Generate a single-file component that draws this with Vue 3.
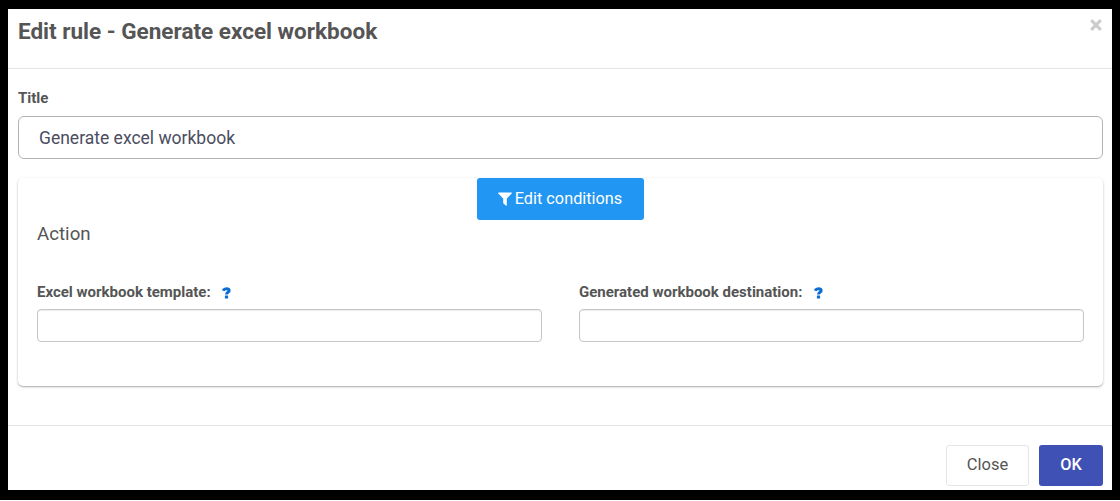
<script setup>
import { ref } from 'vue'

const title = ref('Generate excel workbook')
const fields = ref([
  { id: 'template', label: 'Excel workbook template:', value: '' },
  { id: 'destination', label: 'Generated workbook destination:', value: '' },
])
</script>

<template>
  <div class="backdrop">
    <section class="modal" role="dialog" aria-labelledby="modal-title">
      <header class="modal-header">
        <h1 id="modal-title">Edit rule - Generate excel workbook</h1>
        <button class="dismiss" type="button" aria-label="Dismiss">
          <svg viewBox="0 0 12 12" width="12" height="12">
            <path d="M1.2 1.2 10.8 10.8M10.8 1.2 1.2 10.8" />
          </svg>
        </button>
      </header>

      <main class="modal-body">
        <label class="label" for="title">Title</label>
        <input id="title" v-model="title" class="title-input" type="text" />

        <div class="card">
          <button class="btn conditions" type="button">
            <svg viewBox="0 0 14 14" width="14" height="14">
              <path d="M.6.6H13.4Q14.2.8 13.7 1.6L8.8 6.5V13.1Q8.6 14 7.8 13.5L5.2 11.2V6.5L.3 1.6Q-.2.8.6.6Z" />
            </svg>
            <span>Edit conditions</span>
          </button>
          <h2>Action</h2>
          <div class="fields">
            <div v-for="field in fields" :key="field.id" class="field">
              <div class="field-head">
                <label class="label" :for="field.id">{{ field.label }}</label>
                <svg class="help" viewBox="0 0 9 12" width="9" height="12">
                  <path class="hook" d="M1.2 3.7C1.8 2.3 2.8 1.7 4.3 1.7C6.1 1.7 7.2 2.4 7.2 3.7C7.2 5.4 4.5 5.2 4.5 7.6" />
                  <rect x="2.9" y="8.6" width="3.2" height="2.9" rx=".3" />
                </svg>
              </div>
              <input :id="field.id" v-model="field.value" class="field-input" type="text" />
            </div>
          </div>
        </div>
      </main>

      <footer class="modal-footer">
        <button class="btn close" type="button">Close</button>
        <button class="btn ok" type="button">OK</button>
      </footer>
    </section>
  </div>
</template>

<style>
body {
  background: #fff;
}
</style>

<style scoped>
.backdrop,
.backdrop * {
  box-sizing: border-box;
}
.backdrop {
  height: 500px;
  padding: 9px 8px 10px;
  background: #000;
  font-family: Roboto, "Liberation Sans", sans-serif;
  color: #555;
}
button,
input {
  font-family: inherit;
}
.modal {
  display: flex;
  flex-direction: column;
  height: 481px;
  background: #fff;
}
.modal-header {
  display: flex;
  justify-content: space-between;
  align-items: flex-start;
  height: 60px;
  padding: 9px 10px 0;
  border-bottom: 1px solid #e5e5e5;
}
h1 {
  margin: 0;
  font-size: 22.5px;
  line-height: 27px;
  font-weight: 700;
}
.dismiss {
  display: flex;
  padding: 0;
  border: 0;
  background: none;
  margin: 1px 0 0 0;
}
.dismiss svg {
  overflow: visible;
}
.dismiss path {
  stroke: #ccc;
  stroke-width: 3.2;
}
.modal-body {
  height: 356px;
  padding: 20px 9px 0 10px;
}
.label {
  display: block;
  font-size: 15px;
  line-height: 18px;
  font-weight: 700;
}
.title-input {
  display: block;
  width: 100%;
  height: 43px;
  margin-top: 9px;
  padding: 0 20px;
  border: 1px solid #b3b3b3;
  border-radius: 6px;
  background: #fff;
  color: #4a4d60;
  font-size: 17.5px;
}
.card {
  height: 208px;
  margin-top: 19px;
  padding: 0 19px;
  border-radius: 5px;
  box-shadow: 0 1px 3px rgba(0, 0, 0, 0.2), 0 1px 1px rgba(0, 0, 0, 0.16);
}
.btn {
  display: flex;
  align-items: center;
  justify-content: center;
  padding: 0 0 2px;
  border: 0;
  border-radius: 3px;
  font-size: 16.3px;
}
.conditions {
  width: 167px;
  height: 42px;
  margin: 0 auto;
  gap: 3px;
  padding-right: 1px;
  background: #2196f3;
  color: #fff;
}
.conditions svg {
  margin-top: 1px;
}
.conditions path {
  fill: #fff;
}
h2 {
  margin: 2px 0 0;
  font-size: 18.7px;
  line-height: 24px;
  font-weight: 400;
}
.fields {
  display: grid;
  grid-template-columns: 1fr 1fr;
  gap: 37px;
  margin-top: 37px;
}
.field-head {
  display: flex;
  align-items: center;
  gap: 11.5px;
  height: 18px;
}
.help {
  margin-top: 1px;
  fill: #0b6ed3;
}
.help .hook {
  fill: none;
  stroke: #0b6ed3;
  stroke-width: 2.9;
}
.field-input {
  display: block;
  width: 100%;
  height: 33px;
  margin-top: 8px;
  padding: 0 12px;
  border: 1px solid #c6c6c6;
  border-radius: 4px;
  background: #fff;
  box-shadow: inset 0 1px 1px rgba(0, 0, 0, 0.08);
  font-size: 15px;
}
.modal-footer {
  display: flex;
  justify-content: flex-end;
  gap: 10px;
  height: 65px;
  padding: 19px 9px 0 0;
  border-top: 1px solid #e5e5e5;
}
.close {
  width: 83px;
  height: 41px;
  border: 1px solid #e6e6e6;
  background: #fff;
  color: #555;
  font-size: 16.5px;
}
.ok {
  width: 64px;
  height: 41px;
  background: #3f51b5;
  color: #fff;
  font-weight: 500;
}
</style>
